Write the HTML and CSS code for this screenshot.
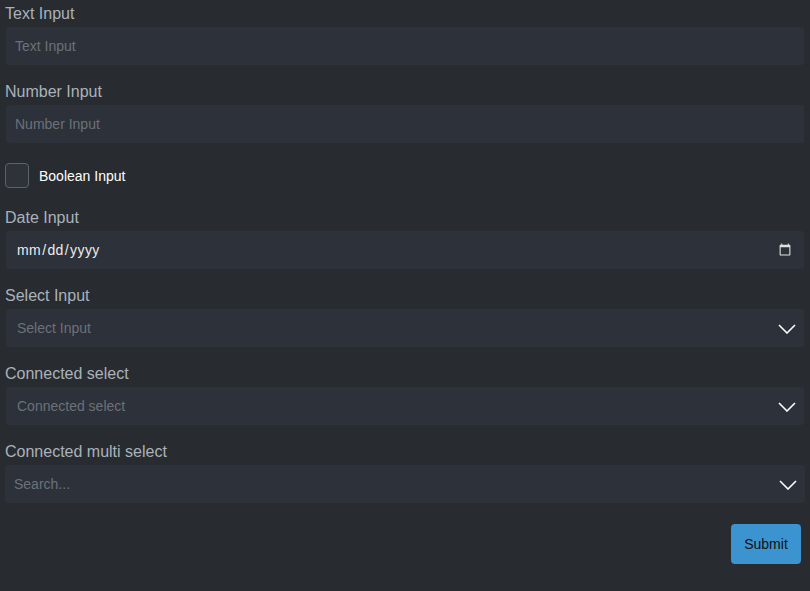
FILE: index.html
```html
<!doctype html>
<html>
	<head>
		<title>form</title>
		<meta charset="utf-8" />
		<link rel="stylesheet" href="styles.css">
	</head>
	<body>
		<form class="form" onsubmit="return false">
			<div class="field">
				<label class="label" for="text">Text Input</label>
				<input class="input" id="text" type="text" placeholder="Text Input" />
			</div>
			<div class="field">
				<label class="label" for="number">Number Input</label>
				<input class="input" id="number" type="number" placeholder="Number Input" />
			</div>
			<div class="field check">
				<input class="checkbox" id="bool" type="checkbox" />
				<label class="check-label" for="bool">Boolean Input</label>
			</div>
			<div class="field">
				<label class="label" for="date">Date Input</label>
				<input class="input date" id="date" type="date" />
			</div>
			<div class="field">
				<label class="label">Select Input</label>
				<div class="select">
					<span class="placeholder">Select Input</span>
					<svg class="chevron" width="18" height="10" viewBox="0 0 18 10"><path d="M1 1l8 8 8-8" fill="none" stroke="#fff" stroke-width="1.6"/></svg>
				</div>
			</div>
			<div class="field">
				<label class="label">Connected select</label>
				<div class="select">
					<span class="placeholder">Connected select</span>
					<svg class="chevron" width="18" height="10" viewBox="0 0 18 10"><path d="M1 1l8 8 8-8" fill="none" stroke="#fff" stroke-width="1.6"/></svg>
				</div>
			</div>
			<div class="field">
				<label class="label">Connected multi select</label>
				<div class="select multi">
					<input class="search" type="text" placeholder="Search..." />
					<svg class="chevron" width="18" height="10" viewBox="0 0 18 10"><path d="M1 1l8 8 8-8" fill="none" stroke="#fff" stroke-width="1.6"/></svg>
				</div>
			</div>
			<div class="actions">
				<button class="submit">Submit</button>
			</div>
		</form>
	</body>
</html>
```

FILE: styles.css
```css
* { margin: 0; padding: 0; box-sizing: border-box; }
body { background: #282c31; font-family: "Liberation Sans", Arial, sans-serif; font-size: 14px; height: 100vh; overflow: hidden; }
.form { padding: 3px 6px 0 6px; display: flex; flex-direction: column; gap: 16px; }
.field { display: flex; flex-direction: column; }
.label { display: block; font-size: 16px; line-height: 19px; color: #aab2ba; padding-top: 1px; margin: 0 0 4px -1px; }
.input { height: 38px; width: 100%; border: none; border-radius: 3px; background: #2d3139; color: #e6e6e6; font-family: inherit; font-size: 14px; padding: 0 9px; outline: none; }
.input::placeholder, .search::placeholder { color: #6b7179; }
.input[type=number] { -moz-appearance: textfield; }
.input::-webkit-inner-spin-button { -webkit-appearance: none; }
.date { color-scheme: dark; padding: 0 10px; color: #ececec; letter-spacing: .4px; }
.date::-webkit-calendar-picker-indicator { opacity: .85; }
.check { flex-direction: row; align-items: center; height: 32px; gap: 10px; padding-top: 1px; }
.checkbox { appearance: none; -webkit-appearance: none; width: 24px; height: 25px; margin-left: -1px; border: 1.5px solid #5a636c; border-radius: 4px; background: #2e333a; }
.check-label { color: #fff; font-size: 14px; }
.select { height: 38px; border-radius: 3px; background: #2d3139; display: flex; align-items: center; justify-content: space-between; padding: 0 8px 0 11px; }
.placeholder { color: #6b7179; }
.chevron { display: block; margin-top: 1px; }
.multi { margin: 0 -1px; padding-left: 9px; }
.search { flex: 1; background: none; border: none; outline: none; color: #e6e6e6; font-family: inherit; font-size: 14px; }
.actions { display: flex; justify-content: flex-end; padding-top: 5px; padding-right: 3px; }
.submit { width: 70px; height: 40px; background: #3b94cf; color: #111; border: none; border-radius: 4px; font-family: inherit; font-size: 14px; }
```
